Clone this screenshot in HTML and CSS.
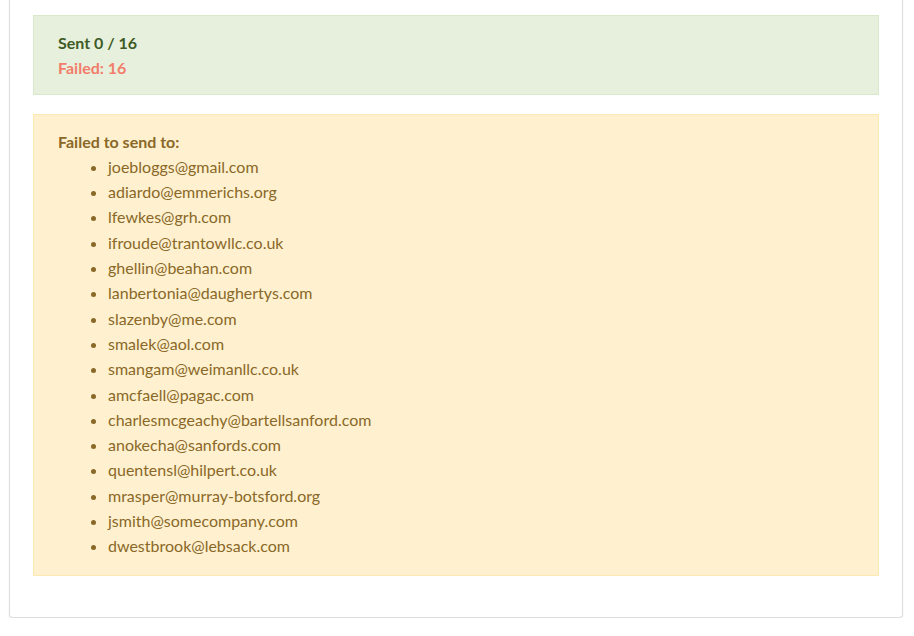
FILE: index.html
```html
<!DOCTYPE html>
<html>
<head>
<meta charset="utf-8">
<link rel="stylesheet" href="styles.css">
</head>
<body>
<div class="card">
  <div class="alert alert-success">
    <div class="sent">Sent 0 / 16</div>
    <div class="failed">Failed: 16</div>
  </div>
  <div class="alert alert-warning">
    <div class="title">Failed to send to:</div>
    <ul class="list">
      <li>joebloggs@gmail.com</li>
      <li>adiardo@emmerichs.org</li>
      <li>lfewkes@grh.com</li>
      <li>ifroude@trantowllc.co.uk</li>
      <li>ghellin@beahan.com</li>
      <li>lanbertonia@daughertys.com</li>
      <li>slazenby@me.com</li>
      <li>smalek@aol.com</li>
      <li>smangam@weimanllc.co.uk</li>
      <li>amcfaell@pagac.com</li>
      <li>charlesmcgeachy@bartellsanford.com</li>
      <li>anokecha@sanfords.com</li>
      <li>quentensl@hilpert.co.uk</li>
      <li>mrasper@murray-botsford.org</li>
      <li>jsmith@somecompany.com</li>
      <li>dwestbrook@lebsack.com</li>
    </ul>
  </div>
</div>
</body>
</html>
```
FILE: styles.css
```css
html, body {
  margin: 0;
  padding: 0;
  background: #ffffff;
}
body {
  font-family: Lato, "Open Sans", sans-serif;
  font-size: 16px;
  line-height: 25.3px;
}
.card {
  margin: 0 11px 0 9px;
  border: 1px solid #dedede;
  border-top: none;
  border-radius: 0 0 4px 4px;
  box-shadow: 0 1px 2px rgba(0,0,0,0.08);
  padding: 15px 23px 41px 23px;
}
.alert {
  border: 1px solid;
  padding-left: 24px;
  padding-right: 24px;
}
.alert-success {
  background: #e7f0dd;
  border-color: #d8e8cb;
  padding-top: 14px;
  padding-bottom: 13px;
  margin-bottom: 19px;
}
.sent {
  font-weight: 700;
  color: #3e5b26;
}
.failed {
  font-weight: 700;
  color: #f27d6b;
}
.alert-warning {
  background: #fff1cf;
  border-color: #fde9b2;
  color: #8a6828;
  padding-top: 14px;
  padding-bottom: 16px;
}
.title {
  font-weight: 700;
}
.list {
  margin: 0;
  padding-left: 50px;
}
```
